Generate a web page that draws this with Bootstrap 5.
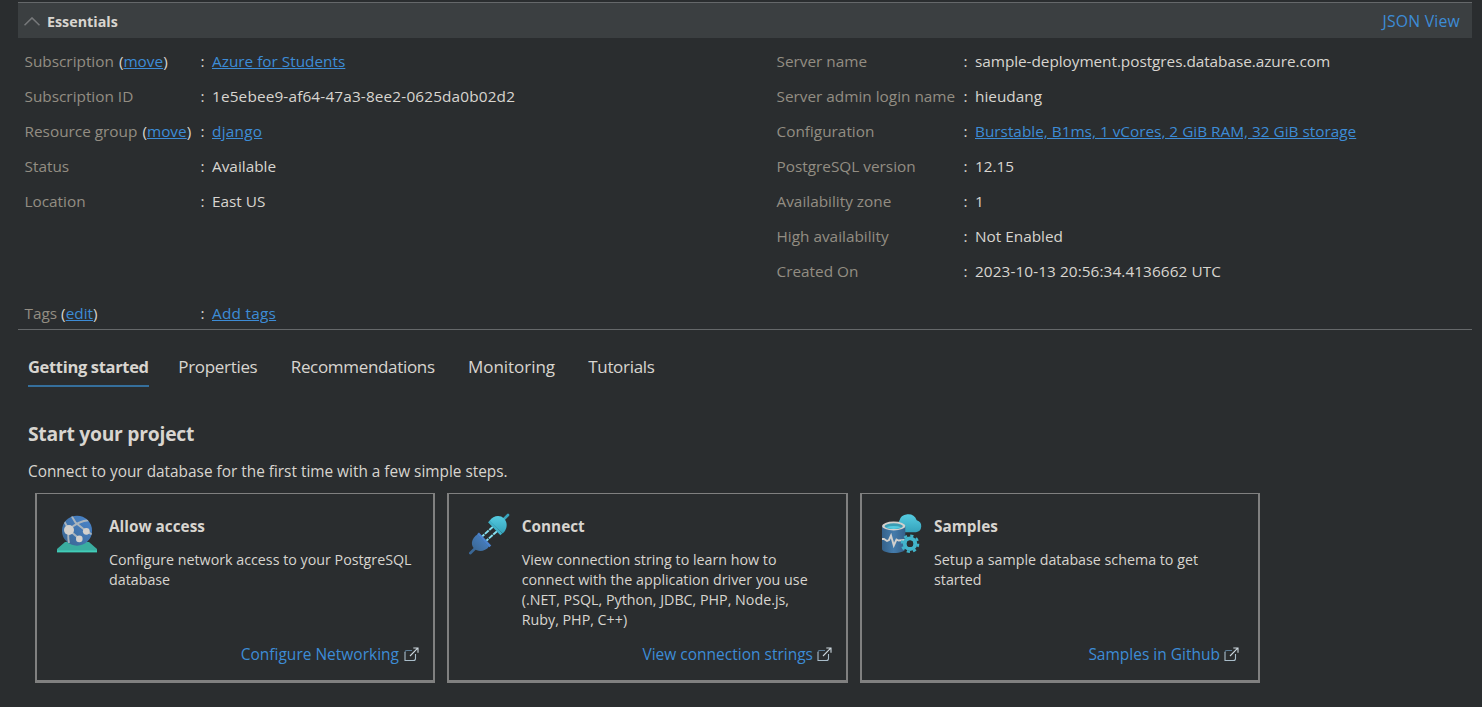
<!DOCTYPE html>
<html lang="en">
<head>
<meta charset="utf-8">
<title>sample-deployment - Overview</title>
<link href="https://cdn.jsdelivr.net/npm/bootstrap@5.3.0/dist/css/bootstrap.min.css" rel="stylesheet">
<style>
body{background:#2a2d2f;color:#d8d5d0;font-family:"Open Sans","Noto Sans",sans-serif;font-size:15.35px;line-height:20px;height:707px;overflow:hidden}
a{color:#3d8cd6}
.panel-wrap{margin:2px 10px 0 18px}
.ess-head{height:36px;background:#3b3f41;border-top:1px solid #65686a;padding:1px 12px 0 6px}
.ess-title{font-size:14.3px;font-weight:700;margin-left:7px;padding-top:1px}
.json{font-size:15.8px;letter-spacing:.2px}
.ess-body{height:292px;border-bottom:1px solid #65686a;padding:5px 6.5px 0}
.ess-main{height:252px}
.col-left{width:752px}
.pair{height:35px}
.key{width:176px;color:#938d83;white-space:nowrap}
.key span{color:#d8d5d0;margin-left:1px}
.col-right .key{width:187px}
.sep{width:11.5px}
.id-text{letter-spacing:.15px}
.date-text{letter-spacing:.08px}
.host-text{letter-spacing:-.05px}
.add-tags{letter-spacing:.25px}
.tab-list{height:45px;margin:12px 0 0 10px;font-size:17px;gap:33.3px}
.tab-list .nav-link{padding:14px 0 0;color:#d8d5d0;line-height:22px;height:45px;letter-spacing:-.32px;white-space:nowrap}
.tab-list .nav-link.active{font-weight:700;border-bottom:2px solid #356f9c;font-size:16.5px;letter-spacing:-.33px;width:121px;margin-right:-4px}
.tab-list .wide{letter-spacing:-.05px}
.section{margin:0 0 0 28px}
.section h1{font-size:19.3px;font-weight:700;letter-spacing:-.25px;line-height:26px;margin:34px 0 0}
.section p{margin:15px 0 0;font-size:15.38px}
.deck{margin:11px 0 0 7px;gap:12px}
.tile{width:400px;height:190px;border:solid #808080;border-width:1px 2px 3px;padding:0 14px 0 20px;gap:12px}
.tile.mid{width:401px}
.tile svg.art{width:42px;height:42px;margin:19px -2px 0 0}
.mid svg.art{margin-right:-1.3px}
.tile h2{font-size:15.35px;font-weight:700;line-height:20px;margin:22px 0 0}
.tile .desc{font-size:14.27px;margin:14px 0 0;white-space:nowrap}
.go{font-size:15.5px;right:13px;bottom:16px;gap:5px}
.go svg{margin-right:1px}
.mid .go{right:13px}
.mid .go{gap:4px}
.end .go{right:18px}
.end .go{gap:4px}
</style>
</head>
<body>
<svg width="0" height="0" class="position-absolute">
  <defs>
    <linearGradient id="blue" x1="0" y1="1" x2="1" y2="0"><stop offset="0" stop-color="#3a658f"/><stop offset="1" stop-color="#4a86cf"/></linearGradient>
    <linearGradient id="cyan" x1="0" y1="0" x2="0" y2="1"><stop offset="0" stop-color="#55cbe0"/><stop offset="1" stop-color="#35a2bb"/></linearGradient>
    <linearGradient id="drum"><stop offset="0" stop-color="#35618a"/><stop offset=".5" stop-color="#447bab"/><stop offset="1" stop-color="#35618a"/></linearGradient>
    <clipPath id="globe"><circle cx="20" cy="17.700" r="15"/></clipPath>
    <symbol id="ext" viewBox="0 0 15 15">
      <path d="M8 3.500H2.800Q1 3.500 1 5.300" fill="none" stroke="#5f7f98" stroke-width="1.100"/>
      <path d="M1 5V13.500H9.500Q11.500 13.500 11.500 11.500V7" fill="none" stroke="#a9bdca" stroke-width="1.100"/>
      <path d="M6 9 13.700 1.200M9.300 1H14V5.700" fill="none" stroke="#cdd7de" stroke-width="1.100"/>
    </symbol>
  </defs>
</svg>
<div class="panel-wrap">
  <div class="ess-head d-flex align-items-center">
    <svg width="16" height="9" viewBox="0 0 16 9"><path d="M.5 8.300 8 .9l7.500 7.400" fill="none" stroke="#77797b" stroke-width="1.500"/></svg>
    <span class="ess-title">Essentials</span>
    <a href="#" class="json ms-auto text-decoration-none">JSON View</a>
  </div>
  <div class="ess-body">
    <div class="ess-main d-flex">
      <div class="col-left">
        <div class="pair d-flex align-items-center"><div class="key">Subscription <span>(<a href="#">move</a>)</span></div><div class="sep">:</div><a href="#">Azure for Students</a></div>
        <div class="pair d-flex align-items-center"><div class="key">Subscription ID</div><div class="sep">:</div><div class="id-text">1e5ebee9-af64-47a3-8ee2-0625da0b02d2</div></div>
        <div class="pair d-flex align-items-center"><div class="key">Resource group <span>(<a href="#">move</a>)</span></div><div class="sep">:</div><a href="#" class="add-tags">django</a></div>
        <div class="pair d-flex align-items-center"><div class="key">Status</div><div class="sep">:</div><div>Available</div></div>
        <div class="pair d-flex align-items-center"><div class="key">Location</div><div class="sep">:</div><div>East US</div></div>
      </div>
      <div class="col-right">
        <div class="pair d-flex align-items-center"><div class="key">Server name</div><div class="sep">:</div><div class="host-text">sample-deployment.postgres.database.azure.com</div></div>
        <div class="pair d-flex align-items-center"><div class="key">Server admin login name</div><div class="sep">:</div><div>hieudang</div></div>
        <div class="pair d-flex align-items-center"><div class="key">Configuration</div><div class="sep">:</div><a href="#">Burstable, B1ms, 1 vCores, 2 GiB RAM, 32 GiB storage</a></div>
        <div class="pair d-flex align-items-center"><div class="key">PostgreSQL version</div><div class="sep">:</div><div>12.15</div></div>
        <div class="pair d-flex align-items-center"><div class="key">Availability zone</div><div class="sep">:</div><div>1</div></div>
        <div class="pair d-flex align-items-center"><div class="key">High availability</div><div class="sep">:</div><div>Not Enabled</div></div>
        <div class="pair d-flex align-items-center"><div class="key">Created On</div><div class="sep">:</div><div class="date-text">2023-10-13 20:56:34.4136662 UTC</div></div>
      </div>
    </div>
    <div class="pair d-flex align-items-center"><div class="key">Tags <span class="ms-0">(<a href="#">edit</a>)</span></div><div class="sep">:</div><a href="#" class="add-tags">Add tags</a></div>
  </div>
  <nav class="nav tab-list flex-nowrap">
    <a class="nav-link active" href="#">Getting started</a>
    <a class="nav-link" href="#">Properties</a>
    <a class="nav-link" href="#">Recommendations</a>
    <a class="nav-link wide" href="#">Monitoring</a>
    <a class="nav-link" href="#">Tutorials</a>
  </nav>
</div>
<main class="section">
  <h1>Start your project</h1>
  <p>Connect to your database for the first time with a few simple steps.</p>
  <div class="deck d-flex">
    <div class="tile position-relative d-flex">
      <svg class="art flex-shrink-0" viewBox="0 0 42 42">
        <path d="M0 36 8 29H32L40 36V39.300H0Z" fill="#3aada0"/><path d="M0 37.500H40V39.300H0Z" fill="#42cdb8"/>
        <circle cx="20" cy="17.700" r="15" fill="url(#blue)"/>
        <g clip-path="url(#globe)" fill="none" stroke="#a9b4bd" stroke-width="1.900">
          <path d="M12 17Q20 8 33 7M14 2 18.500 9.500 29.300 18.300 36 22M12 17 22.300 25.700M12 17Q10.500 23 12 30M12 17 7 8"/>
        </g>
        <g fill="#d2d0cd"><circle cx="12" cy="17" r="5"/><circle cx="29.300" cy="18.300" r="3.400"/><circle cx="22.300" cy="25.900" r="3.300"/></g>
      </svg>
      <div><h2>Allow access</h2><div class="desc">Configure network access to your PostgreSQL<br>database</div></div>
      <a href="#" class="go position-absolute d-flex align-items-center text-decoration-none">Configure Networking <svg width="15" height="15"><use href="#ext"/></svg></a>
    </div>
    <div class="tile mid position-relative d-flex">
      <svg class="art flex-shrink-0" viewBox="0 0 42 42">
        <path d="M24 13.700 13 23.500M28 18.200 17 28" stroke="#86dff0" stroke-width="1.900" stroke-dasharray="5 .8" fill="none"/>
        <path d="M33 8 39 2" stroke="#38a3bc" stroke-width="2.600" stroke-linecap="round"/>
        <path d="M20.500 8C24 2.500 31 1.300 35 5.500S38.500 16.500 33.500 20.500Z" fill="url(#cyan)"/>
        <path d="M20 8.300 32.300 21.300" stroke="#3fb2c9" stroke-width="2.600"/>
        <path d="M7 34.500 1.200 40.200" stroke="#3a6796" stroke-width="2.600" stroke-linecap="round"/>
        <path d="M8.500 21.500C3 24.500 1 31.500 5 35.500S16.500 38.500 20 33.500Z" fill="url(#blue)"/>
        <path d="M9 20.300 21.300 33.300" stroke="#4a82cc" stroke-width="2.600"/>
      </svg>
      <div><h2>Connect</h2><div class="desc">View connection string to learn how to<br>connect with the application driver you use<br>(.NET, PSQL, Python, JDBC, PHP, Node.js,<br>Ruby, PHP, C++)</div></div>
      <a href="#" class="go position-absolute d-flex align-items-center text-decoration-none">View connection strings <svg width="15" height="15"><use href="#ext"/></svg></a>
    </div>
    <div class="tile end position-relative d-flex">
      <svg class="art flex-shrink-0" viewBox="1 1 42 42">
        <path d="M21 20.300A6 6 0 0 1 18 9.500 9.300 9.300 0 0 1 35.700 8.200 6.200 6.200 0 0 1 35 20.300Z" fill="url(#cyan)"/>
        <path d="M1 14V37C1 39.300 6 41 12.700 41S24.300 39.300 24.300 37V14Z" fill="url(#drum)"/>
        <ellipse cx="12.700" cy="14" rx="11.700" ry="4.400" fill="#d2d0cd"/>
        <ellipse cx="12.700" cy="14.200" rx="9.200" ry="2.900" fill="#3b9db4"/>
        <path d="M5 15.300Q12.700 12.500 20.400 15.300Q12.700 18.800 5 15.300" fill="#55cbe0"/>
        <path d="M1 27H3L6 29 8 28 10 23.500 12.800 33.500 15.500 27.500 17.500 28.500 24 28" fill="none" stroke="#d2d0cd" stroke-width="1.900"/>
        <circle cx="29" cy="31.700" r="8.100" fill="none" stroke="#42b4ca" stroke-width="2.400" stroke-dasharray="3.180 3.180"/>
        <circle cx="29" cy="31.700" r="5.200" fill="none" stroke="#42b4ca" stroke-width="4"/>
        <circle cx="29" cy="31.700" r="3.200" fill="#2a2d2f"/>
      </svg>
      <div><h2>Samples</h2><div class="desc">Setup a sample database schema to get<br>started</div></div>
      <a href="#" class="go position-absolute d-flex align-items-center text-decoration-none">Samples in Github <svg width="15" height="15"><use href="#ext"/></svg></a>
    </div>
  </div>
</main>
<script src="https://cdn.jsdelivr.net/npm/bootstrap@5.3.0/dist/js/bootstrap.bundle.min.js"></script>
</body>
</html>
